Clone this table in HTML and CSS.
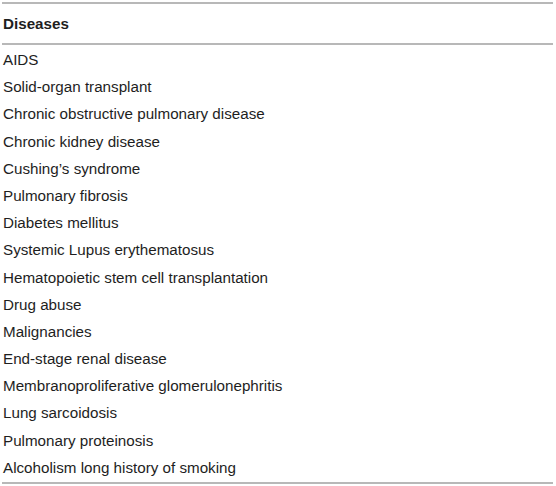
FILE: index.html
```html
<!DOCTYPE html>
<html>
<head>
<meta charset="utf-8">
<link rel="stylesheet" href="styles.css">
</head>
<body>
<div class="table">
  <div class="head">Diseases</div>
  <div class="body">
    <div class="row">AIDS</div>
    <div class="row">Solid-organ transplant</div>
    <div class="row">Chronic obstructive pulmonary disease</div>
    <div class="row">Chronic kidney disease</div>
    <div class="row">Cushing’s syndrome</div>
    <div class="row">Pulmonary fibrosis</div>
    <div class="row">Diabetes mellitus</div>
    <div class="row">Systemic Lupus erythematosus</div>
    <div class="row">Hematopoietic stem cell transplantation</div>
    <div class="row">Drug abuse</div>
    <div class="row">Malignancies</div>
    <div class="row">End-stage renal disease</div>
    <div class="row">Membranoproliferative glomerulonephritis</div>
    <div class="row">Lung sarcoidosis</div>
    <div class="row">Pulmonary proteinosis</div>
    <div class="row">Alcoholism long history of smoking</div>
  </div>
</div>
</body>
</html>
```
FILE: styles.css
```css
html, body {
  margin: 0;
  padding: 0;
  background: #fff;
}
body {
  padding: 2px 3px 0 2px;
  font-family: "Liberation Sans", Arial, sans-serif;
  color: #1e1e1e;
  font-size: 15.2px;
}
.table {
  border-top: 2px solid #b8b8b8;
  border-bottom: 2px solid #b8b8b8;
}
.head {
  font-weight: bold;
  height: 39px;
  line-height: 40px;
  padding-left: 1px;
  border-bottom: 2px solid #b8b8b8;
}
.body {
  padding: 2px 0 0 0;
}
.row {
  height: 27.2px;
  line-height: 26px;
  padding-left: 1px;
}
```
